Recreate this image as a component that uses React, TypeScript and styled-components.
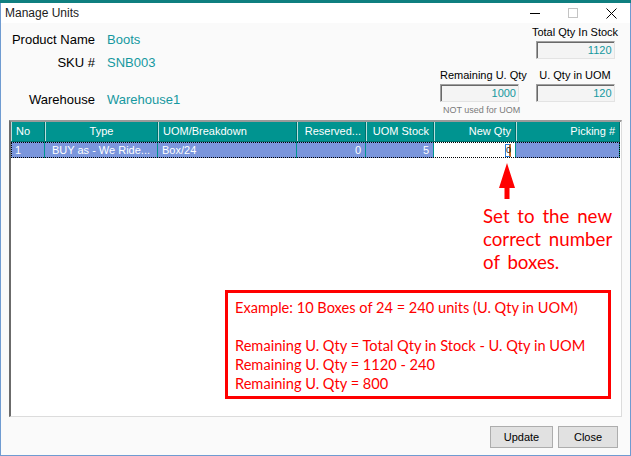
import React from 'react';
import styled, { createGlobalStyle } from 'styled-components';

const TEAL = '#009490';
const VALUE = '#15989f';
const RED = '#ff0000';

const GlobalStyle = createGlobalStyle`
  html, body {
    margin: 0;
    padding: 0;
    background: #fafafa;
  }
  body {
    font-family: "Liberation Sans", Arial, sans-serif;
  }
`;

const Page = styled.div`
  width: 631px;
  height: 456px;
  display: flex;
  flex-direction: column;
  overflow: hidden;
`;

const BackStrip = styled.div`
  flex: none;
  height: 3px;
  background: #0f7f80;
`;

const Window = styled.div`
  flex: 1;
  display: flex;
  flex-direction: column;
  border: 1px solid #6f9bd1;
  border-top: none;
  background: #fafafa;
`;

const TitleBar = styled.div`
  height: 20px;
  display: flex;
  align-items: center;
  background: #fff;
  padding-left: 4px;
`;

const Title = styled.div`
  flex: 1;
  font-size: 12px;
  color: #1b1b1b;
`;

const CaptionButton = styled.div`
  width: 38px;
  height: 20px;
  display: flex;
  align-items: center;
  justify-content: center;
`;

const Body = styled.div`
  flex: 1;
  display: flex;
  flex-direction: column;
  padding: 0 8px;
`;

const TopSection = styled.div`
  height: 97px;
  display: flex;
  justify-content: space-between;
`;

const InfoList = styled.div`
  display: flex;
  flex-direction: column;
`;

const InfoRow = styled.div<{ $space: number }>`
  display: flex;
  margin-top: ${(p) => p.$space}px;
  line-height: 16px;
  font-size: 13px;
`;

const InfoLabel = styled.div`
  width: 86px;
  text-align: right;
  color: #000;
`;

const InfoValue = styled.div`
  margin-left: 12px;
  color: ${VALUE};
`;

const QtyPanel = styled.div`
  display: grid;
  grid-template-columns: 88px 90px;
  grid-template-areas:
    ". totalLabel"
    ". totalBox"
    "remLabel uomLabel"
    "remBox uomBox"
    "note .";
  column-gap: 2px;
  row-gap: 2px;
  align-content: start;
  padding-top: 2px;
  margin-right: 2px;
`;

const QtyLabel = styled.div<{ $area: string; $center?: boolean; $space?: number }>`
  grid-area: ${(p) => p.$area};
  justify-self: ${(p) => (p.$center ? 'center' : 'start')};
  margin-top: ${(p) => p.$space || 0}px;
  height: 14px;
  line-height: 14px;
  font-size: 11px;
  white-space: nowrap;
  color: #000;
`;

const QtyBox = styled.div<{ $area: string; $center?: boolean }>`
  grid-area: ${(p) => p.$area};
  justify-self: ${(p) => (p.$center ? 'center' : 'start')};
  box-sizing: border-box;
  width: 79px;
  height: 18px;
  padding-right: 2px;
  border-style: solid;
  border-width: 1px;
  border-color: #a0a0a0 #e3e3e3 #e3e3e3 #a0a0a0;
  box-shadow: inset 1px 1px 0 #696969;
  background: #f4f4f4;
  text-align: right;
  font-size: 11px;
  line-height: 16px;
  color: ${VALUE};
`;

const Note = styled.div`
  grid-area: note;
  margin-left: 3px;
  height: 12px;
  line-height: 12px;
  font-size: 9px;
  color: #7a7a7a;
  white-space: nowrap;
`;

const Grid = styled.div`
  position: relative;
  box-sizing: border-box;
  height: 297px;
  background: #fff;
  border-style: solid;
  border-width: 2px 1px 1px 2px;
  border-color: #9a9a9a #dcdcdc #dcdcdc #6b6b6b;
  font-size: 11px;
`;

const HeaderRow = styled.div`
  display: flex;
  width: 609px;
  height: 20px;
  background: ${TEAL};
  color: #fff;
  border-bottom: 1px solid #00706c;
  box-sizing: border-box;
`;

const HeaderCell = styled.div<{ $w: number; $align: string }>`
  box-sizing: border-box;
  width: ${(p) => p.$w}px;
  padding: 0 4px;
  line-height: 19px;
  text-align: ${(p) => p.$align};
  border-left: 1px solid #b9dfdd;
  border-right: 1px solid #006f6b;
  white-space: nowrap;
  overflow: hidden;
`;

const DataRow = styled.div`
  display: flex;
  width: 609px;
  height: 16px;
  background: #7b96dc;
  color: #fff;
  outline: 1px dotted #000;
  outline-offset: -1px;
`;

const DataCell = styled.div<{ $w: number; $align: string; $edit?: boolean }>`
  box-sizing: border-box;
  width: ${(p) => p.$w}px;
  padding: 0 4px;
  line-height: 16px;
  text-align: ${(p) => p.$align};
  border-right: 1px solid ${TEAL};
  white-space: nowrap;
  overflow: hidden;
  background: ${(p) => (p.$edit ? '#fff' : 'transparent')};
  color: ${(p) => (p.$edit ? '#000' : '#fff')};
  display: ${(p) => (p.$edit ? 'flex' : 'block')};
  justify-content: flex-end;
  align-items: center;
`;

const Caret = styled.span`
  display: inline-block;
  box-sizing: border-box;
  width: 6px;
  height: 13px;
  border: 1px solid #2b7fd9;
  border-right: 2px solid #c86a1f;
  font-size: 9px;
  line-height: 11px;
  color: #1a1a1a;
  text-align: center;
`;

const Arrow = styled.svg`
  position: absolute;
  left: 488px;
  top: 41px;
`;

const Hint = styled.div`
  position: absolute;
  left: 472px;
  top: 83px;
  font-family: Lato, "Open Sans", sans-serif;
  font-size: 18.7px;
  word-spacing: 3px;
  line-height: 23px;
  color: ${RED};
  white-space: nowrap;
`;

const ExampleBox = styled.div`
  position: absolute;
  left: 214px;
  top: 168px;
  box-sizing: border-box;
  width: 386px;
  height: 109px;
  border: 3px solid ${RED};
  padding: 5px 0 0 7px;
  font-family: Lato, "Open Sans", sans-serif;
  font-size: 14.6px;
  line-height: 19px;
  color: ${RED};
  white-space: nowrap;
`;

const Footer = styled.div`
  height: 38px;
  display: flex;
  justify-content: flex-end;
  align-items: flex-start;
  gap: 5px;
  padding: 9px 4px 0 0;
  box-sizing: border-box;
`;

const Button = styled.button<{ $w: number }>`
  width: ${(p) => p.$w}px;
  height: 22px;
  padding: 0;
  background: #e1e1e1;
  border: 1px solid #adadad;
  font-family: "Liberation Sans", Arial, sans-serif;
  font-size: 11px;
  color: #000;
`;

const columns = [
  { title: 'No', w: 34, align: 'left' },
  { title: 'Type', w: 113, align: 'center' },
  { title: 'UOM/Breakdown', w: 139, align: 'left' },
  { title: 'Reserved...', w: 69, align: 'right' },
  { title: 'UOM Stock', w: 68, align: 'right' },
  { title: 'New Qty', w: 82, align: 'right' },
  { title: 'Picking #', w: 104, align: 'right' },
];

const row = ['1', 'BUY as - We Ride...', 'Box/24', '0', '5', '', ''];

export default function App() {
  return (
    <Page>
      <GlobalStyle />
      <BackStrip />
      <Window>
        <TitleBar>
          <Title>Manage Units</Title>
          <CaptionButton>
            <svg width="10" height="10" viewBox="0 0 10 10">
              <line x1="0" y1="5.5" x2="10" y2="5.5" stroke="#000" strokeWidth="1" />
            </svg>
          </CaptionButton>
          <CaptionButton>
            <svg width="10" height="10" viewBox="0 0 10 10">
              <rect x="0.5" y="0.5" width="9" height="9" fill="none" stroke="#c4c4c4" strokeWidth="1" />
            </svg>
          </CaptionButton>
          <CaptionButton>
            <svg width="11" height="11" viewBox="0 0 11 11">
              <path d="M0.5 0.5 L10.5 10.5 M10.5 0.5 L0.5 10.5" stroke="#000" strokeWidth="1" />
            </svg>
          </CaptionButton>
        </TitleBar>
        <Body>
          <TopSection>
            <InfoList>
              <InfoRow $space={9}>
                <InfoLabel>Product Name</InfoLabel>
                <InfoValue>Boots</InfoValue>
              </InfoRow>
              <InfoRow $space={7}>
                <InfoLabel>SKU #</InfoLabel>
                <InfoValue>SNB003</InfoValue>
              </InfoRow>
              <InfoRow $space={21}>
                <InfoLabel>Warehouse</InfoLabel>
                <InfoValue>Warehouse1</InfoValue>
              </InfoRow>
            </InfoList>
            <QtyPanel>
              <QtyLabel $area="totalLabel" $center>Total Qty In Stock</QtyLabel>
              <QtyBox $area="totalBox" $center>1120</QtyBox>
              <QtyLabel $area="remLabel" $space={7}>Remaining U. Qty</QtyLabel>
              <QtyLabel $area="uomLabel" $center $space={7}>U. Qty in UOM</QtyLabel>
              <QtyBox $area="remBox">1000</QtyBox>
              <QtyBox $area="uomBox" $center>120</QtyBox>
              <Note>NOT used for UOM</Note>
            </QtyPanel>
          </TopSection>
          <Grid>
            <HeaderRow>
              {columns.map((c) => (
                <HeaderCell key={c.title} $w={c.w} $align={c.align}>
                  {c.title}
                </HeaderCell>
              ))}
            </HeaderRow>
            <DataRow>
              {columns.map((c, i) => (
                <DataCell key={c.title} $w={c.w} $align={c.align} $edit={c.title === 'New Qty'}>
                  {c.title === 'New Qty' ? <Caret>0</Caret> : row[i]}
                </DataCell>
              ))}
            </DataRow>
            <Arrow width="16" height="36" viewBox="0 0 16 36">
              <polygon points="8,0 16,25 10.5,25 10.5,36 5.5,36 5.5,25 0,25" fill={RED} />
            </Arrow>
            <Hint>
              Set to the new
              <br />
              correct number
              <br />
              of boxes.
            </Hint>
            <ExampleBox>
              Example: 10 Boxes of 24 = 240 units (U. Qty in UOM)
              <br />
              <br />
              Remaining U. Qty = Total Qty in Stock - U. Qty in UOM
              <br />
              Remaining U. Qty = 1120 - 240
              <br />
              Remaining U. Qty = 800
            </ExampleBox>
          </Grid>
          <Footer>
            <Button $w={63}>Update</Button>
            <Button $w={60}>Close</Button>
          </Footer>
        </Body>
      </Window>
    </Page>
  );
}
